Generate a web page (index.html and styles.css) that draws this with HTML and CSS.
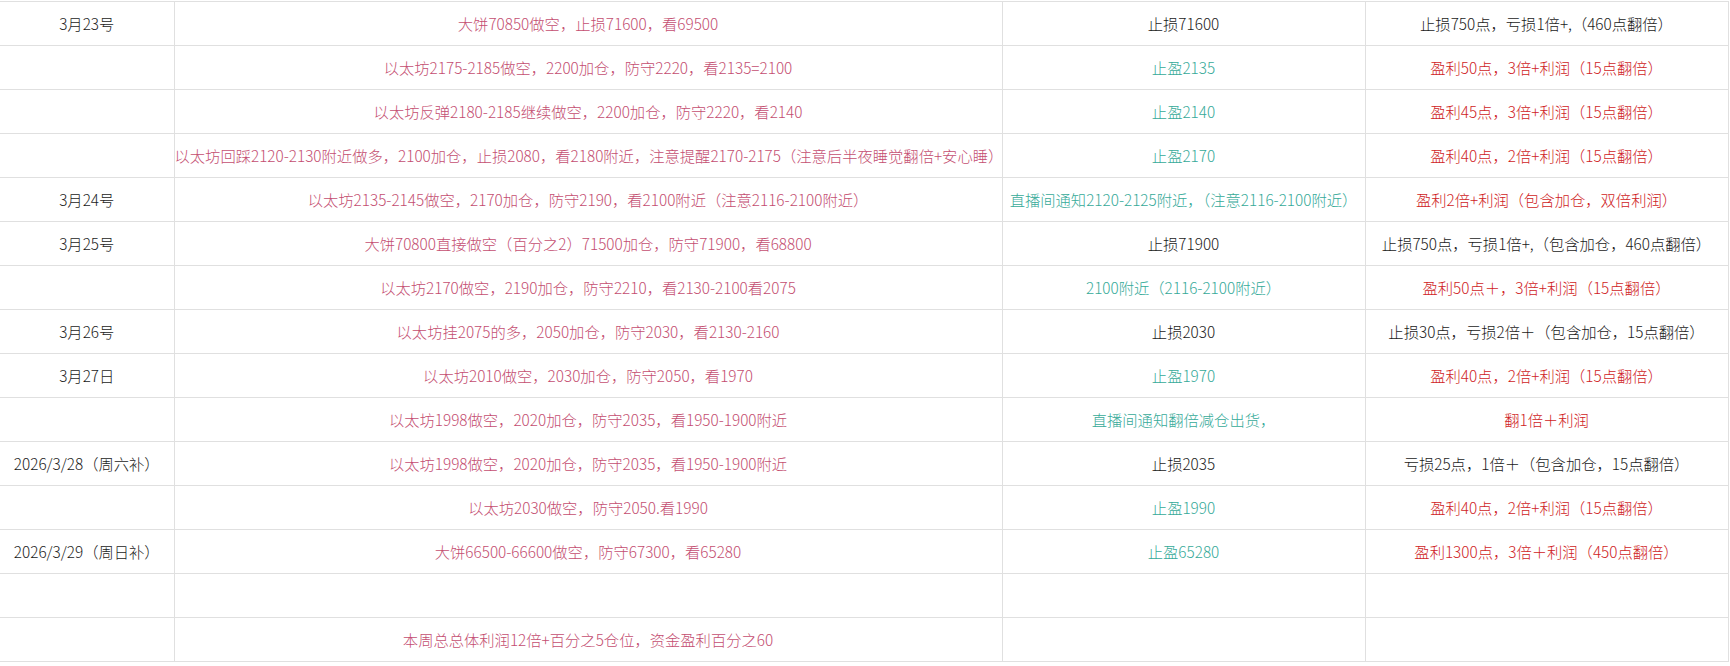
FILE: index.html
```html
<!DOCTYPE html>
<html lang="zh-CN">
<head>
<meta charset="utf-8">
<title>交易记录</title>
<link rel="stylesheet" href="styles.css">
</head>
<body>
<table class="sheet">
  <colgroup>
    <col class="c-date">
    <col class="c-plan">
    <col class="c-exit">
    <col class="c-result">
  </colgroup>
  <tbody>
    <tr><td class="dark">3月23号</td><td class="pink">大饼70850做空，止损71600，看69500</td><td class="dark">止损71600</td><td class="dark">止损750点，亏损1倍+,（460点翻倍）</td></tr>
    <tr><td></td><td class="pink">以太坊2175-2185做空，2200加仓，防守2220，看2135=2100</td><td class="teal">止盈2135</td><td class="red">盈利50点，3倍+利润（15点翻倍）</td></tr>
    <tr><td></td><td class="pink">以太坊反弹2180-2185继续做空，2200加仓，防守2220，看2140</td><td class="teal">止盈2140</td><td class="red">盈利45点，3倍+利润（15点翻倍）</td></tr>
    <tr><td></td><td class="pink">以太坊回踩2120-2130附近做多，2100加仓，止损2080，看2180附近，注意提醒2170-2175（注意后半夜睡觉翻倍+安心睡）</td><td class="teal">止盈2170</td><td class="red">盈利40点，2倍+利润（15点翻倍）</td></tr>
    <tr><td class="dark">3月24号</td><td class="pink">以太坊2135-2145做空，2170加仓，防守2190，看2100附近（注意2116-2100附近）</td><td class="teal">直播间通知2120-2125附近，（注意2116-2100附近）</td><td class="red">盈利2倍+利润（包含加仓，双倍利润）</td></tr>
    <tr><td class="dark">3月25号</td><td class="pink">大饼70800直接做空（百分之2）71500加仓，防守71900，看68800</td><td class="dark">止损71900</td><td class="dark">止损750点，亏损1倍+,（包含加仓，460点翻倍）</td></tr>
    <tr><td></td><td class="pink">以太坊2170做空，2190加仓，防守2210，看2130-2100看2075</td><td class="teal">2100附近（2116-2100附近）</td><td class="red">盈利50点＋，3倍+利润（15点翻倍）</td></tr>
    <tr><td class="dark">3月26号</td><td class="pink">以太坊挂2075的多，2050加仓，防守2030，看2130-2160</td><td class="dark">止损2030</td><td class="dark">止损30点，亏损2倍＋（包含加仓，15点翻倍）</td></tr>
    <tr><td class="dark">3月27日</td><td class="pink">以太坊2010做空，2030加仓，防守2050，看1970</td><td class="teal">止盈1970</td><td class="red">盈利40点，2倍+利润（15点翻倍）</td></tr>
    <tr><td></td><td class="pink">以太坊1998做空，2020加仓，防守2035，看1950-1900附近</td><td class="teal">直播间通知翻倍减仓出货，</td><td class="red">翻1倍＋利润</td></tr>
    <tr><td class="dark">2026/3/28（周六补）</td><td class="pink">以太坊1998做空，2020加仓，防守2035，看1950-1900附近</td><td class="dark">止损2035</td><td class="dark">亏损25点，1倍＋（包含加仓，15点翻倍）</td></tr>
    <tr><td></td><td class="pink">以太坊2030做空，防守2050.看1990</td><td class="teal">止盈1990</td><td class="red">盈利40点，2倍+利润（15点翻倍）</td></tr>
    <tr><td class="dark">2026/3/29（周日补）</td><td class="pink">大饼66500-66600做空，防守67300，看65280</td><td class="teal">止盈65280</td><td class="red">盈利1300点，3倍＋利润（450点翻倍）</td></tr>
    <tr><td></td><td></td><td></td><td></td></tr>
    <tr><td></td><td class="pink">本周总总体利润12倍+百分之5仓位，资金盈利百分之60</td><td></td><td></td></tr>
  </tbody>
</table>
</body>
</html>
```

FILE: styles.css
```css
html, body {
  margin: 0;
  padding: 0;
  background: #ffffff;
}

body {
  padding-top: 1px;
  font-family: "Noto Sans CJK SC", "Noto Sans", sans-serif;
  font-size: 15.3px;
  font-weight: 300;
}

.sheet {
  width: 1728px;
  table-layout: fixed;
  border-collapse: collapse;
}

.c-date { width: 174px; }
.c-plan { width: 828px; }
.c-exit { width: 363px; }
.c-result { width: 363px; }

.sheet td {
  height: 43px;
  padding: 0;
  border: 1px solid #e0e0e0;
  text-align: center;
  vertical-align: middle;
  white-space: nowrap;
  line-height: 1;
}

.sheet td:first-child {
  border-left: none;
}

.dark { color: #1a1a1a; }
.pink { color: #c44e71; }
.teal { color: #36aa99; }
.red { color: #cf1c25; }
```
